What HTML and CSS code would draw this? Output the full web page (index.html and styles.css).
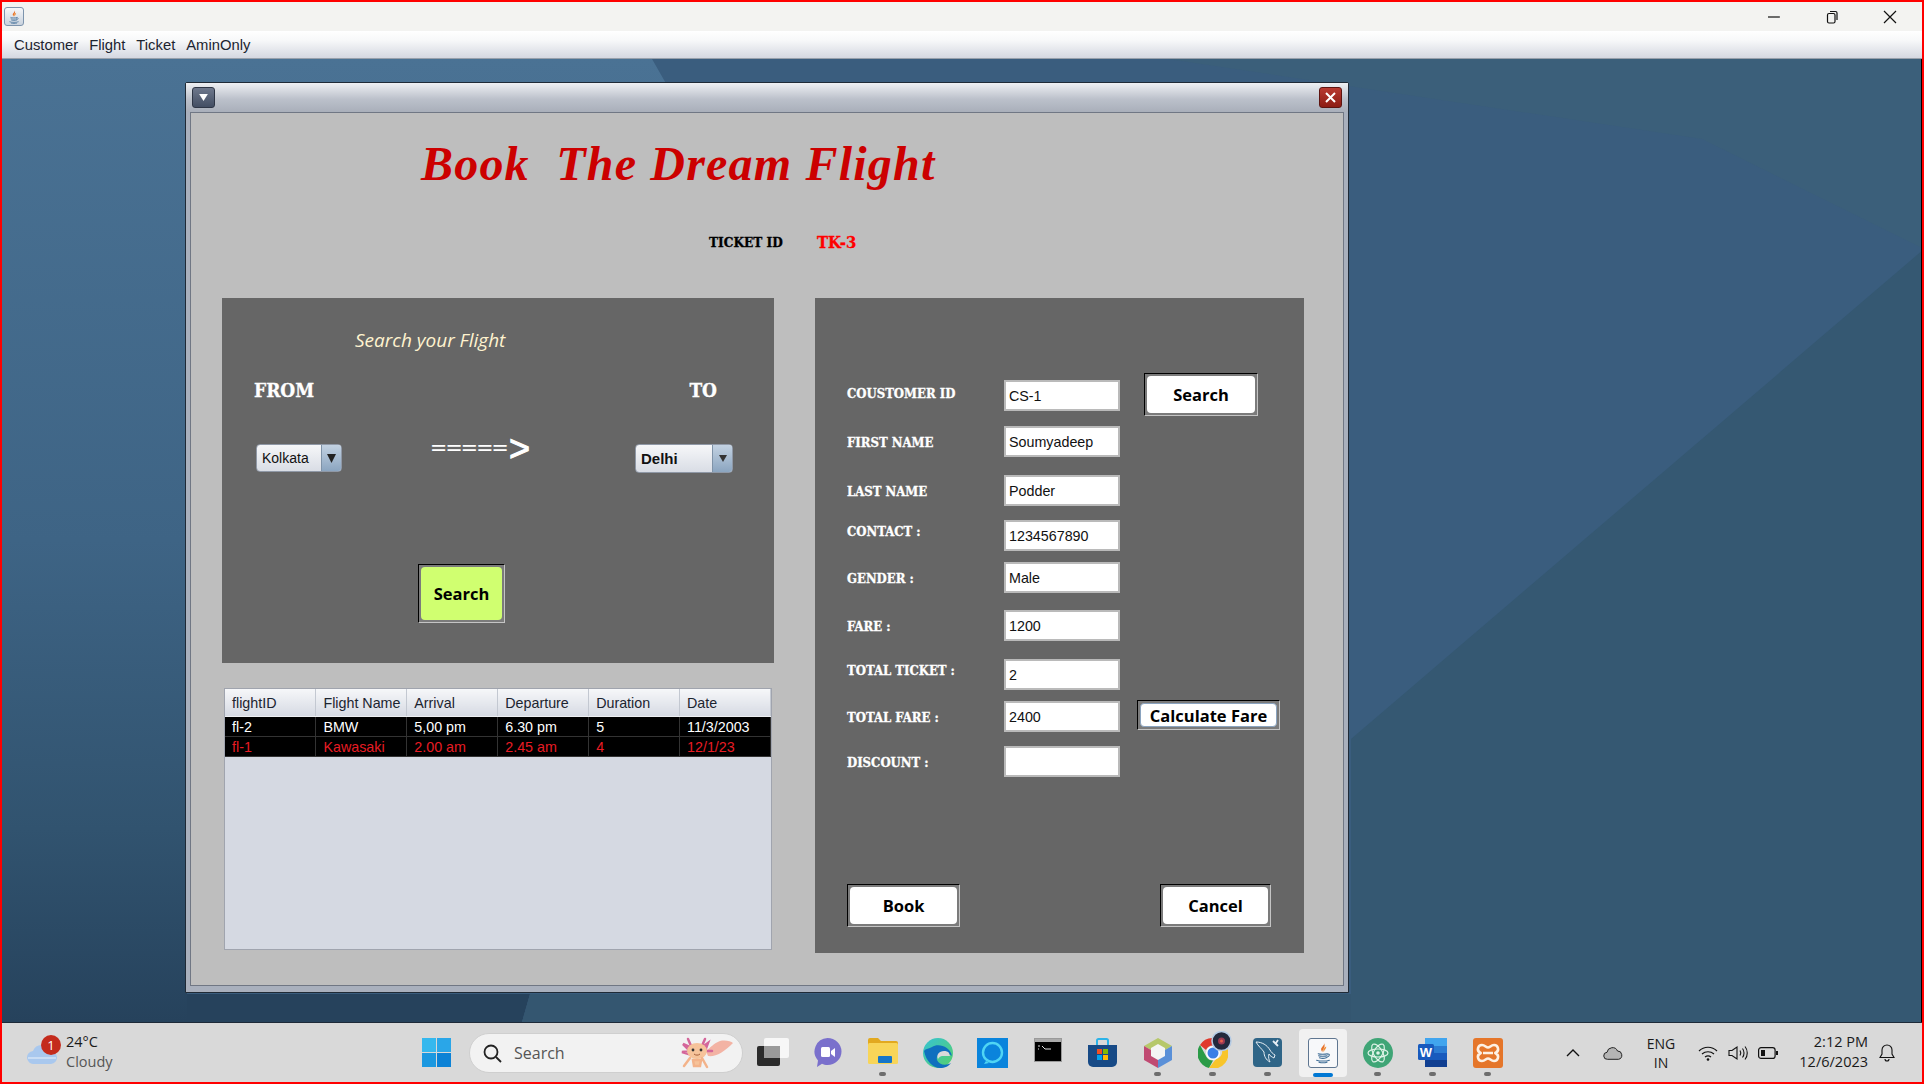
FILE: index.html
```html
<!DOCTYPE html>
<html>

<head>
    <title>Book The Dream Flight</title>
    <link rel="stylesheet" href="styles.css">
</head>

<body>
    <svg class="icon-defs" width="0" height="0">
        <symbol id="java-cup" viewBox="0 0 30 30">
            <path d="M16 2c2 4-5 6-3 10 .6 1.300 1.500 2 1.500 2-1.500-3 5-5 1.500-12z" fill="#e8722a"/>
            <path d="M19 7c-3 2-4.500 3-3.500 5.500.4 1 .8 1.500.8 1.500-.5-2 3-3.500 2.700-7z" fill="#f0923c"/>
            <path d="M9 16c2 .8 9 .8 11.500 0M9.500 18.500c2 .8 8.500.8 10.500 0M10.500 21c2 .7 6.500.7 8.500 0M20.500 16.500c3-.8 4 2.500-1 4M7 24c4 1.500 12 1.500 16 0M10 26.500c3 .8 7 .8 10 0" fill="none" stroke="#3f6d96" stroke-width="1.300" stroke-linecap="round"/>
        </symbol>
    </svg>

    <div class="screen">
        <div class="titlebar">
            <span class="app-icon"><svg width="16" height="16"><use href="#java-cup"/></svg></span>
            <div class="window-controls">
                <span class="window-btn"><svg width="14" height="14" viewBox="0 0 14 14"><path d="M1 7h12" stroke="#111" stroke-width="1.200"/></svg></span>
                <span class="window-btn"><svg width="14" height="14" viewBox="0 0 14 14"><rect x="2.500" y="3.500" width="7.500" height="9.500" rx="1.500" fill="none" stroke="#111" stroke-width="1.200"/><path d="M5 1.500h5.500a1.500 1.500 0 0 1 1.500 1.500v7" fill="none" stroke="#111" stroke-width="1.200"/></svg></span>
                <span class="window-btn"><svg width="14" height="14" viewBox="0 0 14 14"><path d="M1 1l12 12M13 1L1 13" stroke="#111" stroke-width="1.200"/></svg></span>
            </div>
        </div>

        <div class="menubar">
            <span class="menu-item">Customer</span>
            <span class="menu-item">Flight</span>
            <span class="menu-item">Ticket</span>
            <span class="menu-item">AminOnly</span>
        </div>

        <div class="desktop">
            <svg class="wallpaper" width="1922" height="963" viewBox="0 0 1922 963">
                <defs>
                    <linearGradient id="wall-left" x1="0" y1="0" x2="0" y2="1">
                        <stop offset="0" stop-color="#4a7294"/>
                        <stop offset="0.5" stop-color="#3e6485"/>
                        <stop offset="0.8" stop-color="#31536f"/>
                        <stop offset="1" stop-color="#26425c"/>
                    </linearGradient>
                </defs>
                <rect width="1922" height="963" fill="#3a5d7e"/>
                <polygon points="0,0 650,0 690,70 185,520 185,963 0,963" fill="url(#wall-left)"/>
                <polygon points="1166,0 1922,0 1922,190 1700,80" fill="#3b5f7a"/>
                <polygon points="1922,190 1349,680 1349,963 1922,963" fill="#355872"/>
                <polygon points="185,935 528,935 520,963 185,963" fill="#26425c"/>
                <polygon points="528,935 1349,935 1349,963 520,963" fill="#345670"/>
            </svg>

            <div class="internal-frame">
                <div class="frame-title">
                    <span class="frame-btn frame-menu"><svg width="9" height="7" viewBox="0 0 10 8"><path d="M0 0h10L5 8z" fill="#fff"/></svg></span>
                    <span class="frame-btn frame-close"><svg width="13" height="13" viewBox="0 0 13 13"><path d="M2 2l9 9M11 2l-9 9" stroke="#fff" stroke-width="2"/></svg></span>
                </div>

                <div class="frame-body">
                    <h1 class="book-title">Book  The Dream Flight</h1>
                    <div class="ticket-row">
                        <span class="ticket-label">TICKET ID</span>
                        <span class="ticket-value">TK-3</span>
                    </div>

                    <div class="panels">
                        <div class="left-column">
                            <div class="search-panel">
                                <div class="search-heading">Search your Flight</div>
                                <div class="route-row">
                                    <span class="route-label">FROM</span>
                                    <span class="route-label">TO</span>
                                </div>
                                <div class="combo-row">
                                    <div class="combo combo-from">
                                        <span class="combo-value">Kolkata</span>
                                        <span class="combo-arrow"><svg width="9" height="9" viewBox="0 0 9 9"><path d="M0 0h9L4.500 9z" fill="#222"/></svg></span>
                                    </div>
                                    <div class="route-arrow"><span class="arrow-bars">=====</span><span class="arrow-head">&gt;</span></div>
                                    <div class="combo combo-to">
                                        <span class="combo-value">Delhi</span>
                                        <span class="combo-arrow"><svg width="8" height="7" viewBox="0 0 8 7"><path d="M0 0h8L4 7z" fill="#333"/></svg></span>
                                    </div>
                                </div>
                                <div class="btn btn-find"><span class="btn-face">Search</span></div>
                            </div>

                            <div class="table-pane">
                                <table class="flight-table">
                                    <thead>
                                        <tr>
                                            <th>flightID</th>
                                            <th>Flight Name</th>
                                            <th>Arrival</th>
                                            <th>Departure</th>
                                            <th>Duration</th>
                                            <th>Date</th>
                                        </tr>
                                    </thead>
                                    <tbody>
                                        <tr>
                                            <td>fl-2</td>
                                            <td>BMW</td>
                                            <td>5,00 pm</td>
                                            <td>6.30 pm</td>
                                            <td>5</td>
                                            <td>11/3/2003</td>
                                        </tr>
                                        <tr class="row-alert">
                                            <td>fl-1</td>
                                            <td>Kawasaki</td>
                                            <td>2.00 am</td>
                                            <td>2.45 am</td>
                                            <td>4</td>
                                            <td>12/1/23</td>
                                        </tr>
                                    </tbody>
                                </table>
                            </div>
                        </div>

                        <div class="booking-panel">
                            <div class="booking-form">
                                <span class="form-label label-mid">COUSTOMER ID</span>
                                <div class="field">CS-1</div>
                                <div class="btn btn-customer"><span class="btn-face">Search</span></div>

                                <span class="form-label">FIRST NAME</span>
                                <div class="field">Soumyadeep</div>
                                <span></span>

                                <span class="form-label">LAST NAME</span>
                                <div class="field">Podder</div>
                                <span></span>

                                <span class="form-label label-high">CONTACT :</span>
                                <div class="field">1234567890</div>
                                <span></span>

                                <span class="form-label">GENDER :</span>
                                <div class="field">Male</div>
                                <span></span>

                                <span class="form-label">FARE :</span>
                                <div class="field">1200</div>
                                <span></span>

                                <span class="form-label label-high">TOTAL TICKET :</span>
                                <div class="field">2</div>
                                <span></span>

                                <span class="form-label">TOTAL FARE :</span>
                                <div class="field">2400</div>
                                <div class="btn btn-calc"><span class="btn-face">Calculate Fare</span></div>

                                <span class="form-label">DISCOUNT :</span>
                                <div class="field"></div>
                                <span></span>
                            </div>

                            <div class="booking-actions">
                                <div class="btn btn-book"><span class="btn-face">Book</span></div>
                                <div class="btn btn-cancel"><span class="btn-face">Cancel</span></div>
                            </div>
                        </div>
                    </div>
                </div>
            </div>
        </div>

        <div class="taskbar">
            <div class="weather">
                <span class="weather-icon">
                    <svg width="30" height="21" viewBox="0 0 30 21"><path d="M7 21a6.500 6.500 0 0 1-1-13A9 9 0 0 1 23 8a6.500 6.500 0 0 1 1 13z" fill="#a9c8ee"/><path d="M1 15h28" stroke="#d6e4f6" stroke-width="1.500"/></svg>
                    <span class="weather-badge">1</span>
                </span>
                <div class="weather-text">
                    <span>24°C</span>
                    <span class="weather-sub">Cloudy</span>
                </div>
            </div>

            <span class="start-btn">
                <svg width="29" height="29" viewBox="0 0 29 29"><rect width="14" height="14" fill="#35b8ee"/><rect x="15" width="14" height="14" fill="#2aa6e8"/><rect y="15" width="14" height="14" fill="#1b98e0"/><rect x="15" y="15" width="14" height="14" fill="#0c82d6"/></svg>
            </span>

            <div class="task-search">
                <svg width="20" height="20" viewBox="0 0 20 20"><circle cx="9" cy="9" r="6.500" fill="none" stroke="#222" stroke-width="1.800"/><path d="M14 14l5 5" stroke="#222" stroke-width="1.800"/></svg>
                <span class="task-search-text">Search</span>
                <svg class="axolotl" width="56" height="34" viewBox="0 0 56 34">
                    <path d="M30 20c8 1 16-4 25-13-2-2-8-3-13-2-6 2-10 7-14 10z" fill="#f3b3a4"/>
                    <path d="M10 3l4 9-9-4 7 7-8 1 10 3M27 3l-4 9 7-5-3 8 7 0" fill="none" stroke="#d4669a" stroke-width="2.500" stroke-linecap="round"/>
                    <ellipse cx="19" cy="15" rx="10" ry="8" fill="#f6c39a"/>
                    <path d="M12 22l-6 8M24 22l5 9M15 24h8l-1 6h-6z" fill="#f6c39a" stroke="#f3b38a" stroke-width="2.500" stroke-linecap="round"/>
                    <circle cx="15" cy="14" r="1.400" fill="#333"/><circle cx="23" cy="14" r="1.400" fill="#333"/>
                    <path d="M16 18c1.500 1.500 4.500 1.500 6 0" fill="none" stroke="#a5603c"/>
                </svg>
            </div>

            <div class="task-icons">
                <div class="task-slot">
                    <svg width="32" height="28" viewBox="0 0 32 28"><rect y="8" width="23" height="20" rx="2" fill="#2b2b2b"/><rect x="7" width="25" height="20" rx="2" fill="#f7f7f7"/><rect x="7" y="8" width="16" height="12" fill="#9a9a9a"/></svg>
                </div>
                <div class="task-slot">
                    <svg width="29" height="29" viewBox="0 0 29 29"><path d="M14.500 0a14 13.500 0 0 1 0 27c-2 0-4-.4-5.500-1.200L4 29l1-6.500A13.500 13.500 0 0 1 14.500 0z" fill="#7a70cc"/><rect x="8" y="9" width="9" height="10" rx="1.500" fill="#fff"/><path d="M18 13l4-3v9l-4-3z" fill="#fff"/></svg>
                </div>
                <div class="task-slot has-dot">
                    <svg width="30" height="26" viewBox="0 0 30 26"><path d="M0 2a2 2 0 0 1 2-2h8l3 3h15a2 2 0 0 1 2 2v4H0z" fill="#e2a91f"/><rect y="5" width="30" height="21" rx="1.500" fill="#f8d558"/><rect x="10" y="18" width="14" height="7" rx="1" fill="#1676c9"/></svg>
                </div>
                <div class="task-slot">
                    <svg width="30" height="30" viewBox="0 0 30 30"><defs><linearGradient id="edge-a" x1="0" y1="0" x2="1" y2="1"><stop offset="0" stop-color="#36c2d4"/><stop offset="1" stop-color="#56d06a"/></linearGradient></defs><circle cx="15" cy="15" r="15" fill="url(#edge-a)"/><path d="M1 13C3 23 10 30 17 30c5 0 9-2 11-5-5 3-12 2-14-3-1-4 2-7 7-7 3 0 6 1 8 3C27 8 15 5 9 9 5 11 2 11 1 13z" fill="#0f6fbf"/><path d="M15 21c-2-4 1-8 6-8 2 0 4 .6 5 2l1 3H19c-1 0-3 1-4 3z" fill="#d9d9d9"/></svg>
                </div>
                <div class="task-slot">
                    <svg width="31" height="30" viewBox="0 0 31 30"><rect width="31" height="30" fill="#0a84dc"/><circle cx="15.500" cy="14.500" r="9.500" fill="none" stroke="#4fd5f4" stroke-width="2.400"/><path d="M9 23l-2 3 5-1z" fill="#4fd5f4"/></svg>
                </div>
                <div class="task-slot">
                    <svg width="28" height="24" viewBox="0 0 28 24"><rect x=".5" y=".5" width="27" height="23" fill="#000" stroke="#9a9a9a"/><rect x="1" y="1" width="26" height="3" fill="#aaa"/><path d="M4 8h2M4 11h1M8 8l3 3h6" stroke="#ddd" stroke-width="1" fill="none"/></svg>
                </div>
                <div class="task-slot">
                    <svg width="29" height="29" viewBox="0 0 29 29"><path d="M9 7V2.500A1.500 1.500 0 0 1 10.500 1h8A1.500 1.500 0 0 1 20 2.500V7" fill="none" stroke="#2db3e8" stroke-width="2"/><path d="M0 7h29v17a5 5 0 0 1-5 5H5a5 5 0 0 1-5-5z" fill="#174a86"/><rect x="9" y="11" width="5" height="5" fill="#f25022"/><rect x="15" y="11" width="5" height="5" fill="#7fba00"/><rect x="9" y="17" width="5" height="5" fill="#00a4ef"/><rect x="15" y="17" width="5" height="5" fill="#ffb900"/></svg>
                </div>
                <div class="task-slot has-dot">
                    <svg width="28" height="30" viewBox="0 0 28 30"><path d="M14 0l14 8-14 8L0 8z" fill="#b6c86a"/><path d="M0 8l14 8v14L0 22z" fill="#c04a72"/><path d="M28 8l-14 8v14l14-8z" fill="#5a90d8"/><path d="M14 6l7 4v8l-7 4-7-4v-8z" fill="#f4f4f4"/></svg>
                </div>
                <div class="task-slot has-dot">
                    <svg class="chrome-icon" width="30" height="30" viewBox="0 0 30 30"><path d="M15 0a15 15 0 0 1 13 7.500H15a7.500 7.500 0 0 0-7 4.500L2 7A15 15 0 0 1 15 0z" fill="#e0392c"/><path d="M2 7l6.500 12a7.500 7.500 0 0 0 6.500 3.500L11 30A15 15 0 0 1 2 7z" fill="#2b9b47"/><path d="M28 7.500A15 15 0 0 1 11 30l7-9a7.500 7.500 0 0 0 3-13.500z" fill="#f8c52b"/><circle cx="15" cy="15" r="7" fill="#fff"/><circle cx="15" cy="15" r="5.500" fill="#3c7fe6"/></svg>
                    <span class="camera-badge"><svg width="21" height="20" viewBox="0 0 21 20"><circle cx="10.500" cy="10" r="9.500" fill="#23293c" stroke="#b5cbe4" stroke-width="1.600"/><circle cx="10.500" cy="10" r="3.500" fill="#9a3a52"/><circle cx="10.500" cy="10" r="1.500" fill="#e8604c"/></svg></span>
                </div>
                <div class="task-slot has-dot">
                    <svg width="29" height="29" viewBox="0 0 29 29"><rect width="29" height="29" rx="4" fill="#2f6587"/><path d="M3 4c6 0 11 3 14 8 1 2 3 4 5 5l-1 3c-2-1-4-2-5-4-1 3 0 6 1 8-4-2-6-6-6-10C9 11 5 8 3 4z" fill="none" stroke="#e6eef4" stroke-width="1"/><path d="M20 3l5 5M25 2l-2 3" stroke="#e6eef4" stroke-width="1.800"/></svg>
                </div>
                <div class="task-slot task-active">
                    <svg width="30" height="30" viewBox="0 0 30 30" class="java-tile"><rect x=".5" y=".5" width="29" height="29" rx="2.500" fill="#f7f8fa" stroke="#5f7690"/><use href="#java-cup" x="3" y="2" width="24" height="26"/></svg>
                    <span class="active-bar"></span>
                </div>
                <div class="task-slot has-dot">
                    <svg width="30" height="30" viewBox="0 0 30 30"><circle cx="15" cy="15" r="15" fill="#3fa576"/><g fill="none" stroke="#dff3e8" stroke-width="1.200"><ellipse cx="15" cy="15" rx="10" ry="4.500" transform="rotate(60 15 15)"/><ellipse cx="15" cy="15" rx="10" ry="4.500" transform="rotate(-60 15 15)"/><ellipse cx="15" cy="15" rx="10" ry="4"/></g><circle cx="15" cy="15" r="1.800" fill="#dff3e8"/></svg>
                </div>
                <div class="task-slot has-dot">
                    <svg width="29" height="29" viewBox="0 0 29 29"><rect x="7" width="22" height="8" fill="#41a5ee"/><rect x="7" y="8" width="22" height="7" fill="#2b7cd3"/><rect x="7" y="15" width="22" height="7" fill="#185abd"/><rect x="7" y="22" width="22" height="7" fill="#103f91"/><rect y="6" width="16" height="16" rx="1.500" fill="#185abd"/><text x="8" y="19" class="word-letter" text-anchor="middle">W</text></svg>
                </div>
                <div class="task-slot has-dot">
                    <svg width="30" height="30" viewBox="0 0 30 30"><rect width="30" height="30" rx="3" fill="#e5762a"/><path d="M9 7C12 7 13 9.500 15 9.500S18 7 21 7A4 4 0 0 1 23 14.500C22 15 22 15 23 15.500A4 4 0 0 1 21 23C18 23 17 20.500 15 20.500S12 23 9 23A4 4 0 0 1 7 15.500C8 15 8 15 7 14.500A4 4 0 0 1 9 7ZM10 15h10" fill="none" stroke="#fdf1e4" stroke-width="2.600"/></svg>
                </div>
            </div>

            <div class="tray">
                <svg class="tray-chevron" width="14" height="8" viewBox="0 0 14 8"><path d="M1 7l6-6 6 6" fill="none" stroke="#111" stroke-width="1.400"/></svg>
                <svg class="tray-cloud" width="20" height="14" viewBox="0 0 20 14"><path d="M4.500 13.300a3.500 3.500 0 0 1-.5-7A5.500 5.500 0 0 1 14.500 5a4.200 4.200 0 0 1 1 8.300z" fill="#b5b5b5" stroke="#222"/></svg>
                <div class="tray-lang"><span>ENG</span><span>IN</span></div>
                <svg class="tray-wifi" width="20" height="16" viewBox="0 0 20 16"><path d="M1 6c5-5 13-5 18 0M4 9c3.500-3 8.500-3 12 0M7 12c2-1.500 4-1.500 6 0" fill="none" stroke="#111" stroke-width="1.200"/><circle cx="10" cy="14.500" r="1.300" fill="#111"/></svg>
                <svg class="tray-volume" width="20" height="16" viewBox="0 0 20 16"><path d="M1 5.500h3L9 2v12l-5-3.500H1z" fill="none" stroke="#111" stroke-width="1.100"/><path d="M12 5.500c1 1.500 1 3.500 0 5M14.500 3.500c2 2.500 2 6.500 0 9M17 1.500c3 3.500 3 9.500 0 13" fill="none" stroke="#111" stroke-width="1.100"/></svg>
                <svg class="tray-battery" width="20" height="12" viewBox="0 0 20 12"><rect x=".6" y=".6" width="16.500" height="10.800" rx="2.500" fill="none" stroke="#111" stroke-width="1.200"/><rect x="3" y="3" width="4" height="6" fill="#111"/><rect x="18" y="4" width="2" height="4" fill="#111"/></svg>
                <div class="tray-clock"><span>2:12 PM</span><span>12/6/2023</span></div>
                <svg class="tray-bell" width="16" height="18" viewBox="0 0 16 18"><path d="M8 1a5 5 0 0 0-5 5v4l-2 3.500h14L13 10V6a5 5 0 0 0-5-5zM6 15a2 2 0 0 0 4 0" fill="none" stroke="#111" stroke-width="1.100"/></svg>
            </div>
        </div>
    </div>
</body>

</html>
```

FILE: styles.css
```css
body {
    margin: 0;
    font-family: "Liberation Sans", Arial, sans-serif;
    overflow: hidden;
}

.icon-defs {
    position: absolute;
}

.screen {
    width: 1924px;
    height: 1084px;
    box-sizing: border-box;
    border: 2px solid #ff0000;
    display: flex;
    flex-direction: column;
}

/* window chrome */
.titlebar {
    height: 29px;
    background-color: #f3f3f1;
    display: flex;
    align-items: center;
}

.app-icon {
    width: 18px;
    height: 17px;
    margin-left: 2px;
    border: 1px solid #7d94ad;
    border-radius: 3px;
    background: linear-gradient(#f6f7f9, #c9d2dd);
    display: flex;
    align-items: center;
    justify-content: center;
}

.window-controls {
    margin-left: auto;
    padding-right: 3px;
    display: flex;
}

.window-btn {
    width: 58px;
    display: flex;
    justify-content: center;
}

.menubar {
    height: 27px;
    background: linear-gradient(#ffffff, #f7f8f9 35%, #d5d8e1);
    border-bottom: 1px solid #98a0ab;
    padding-left: 7px;
    display: flex;
    align-items: center;
    gap: 1px;
    font-size: 14.8px;
    color: #1c2430;
}

.menu-item {
    padding: 0 5px;
}

/* desktop */
.desktop {
    flex: 1;
    position: relative;
    overflow: hidden;
    border-right: 1px solid #000;
    background-color: #3a5d7e;
}

.wallpaper {
    position: absolute;
    left: 0;
    top: 0;
}

.internal-frame {
    position: absolute;
    left: 183px;
    top: 23px;
    width: 1164px;
    height: 911px;
    box-sizing: border-box;
    border: 1px solid #1f2a36;
    border-radius: 2px 2px 0 0;
    background: #a9b0bd;
}

.frame-title {
    height: 29px;
    padding: 4px 6px 0;
    box-sizing: border-box;
    background: linear-gradient(#eef0f3, #bcc1cb 55%, #a9afba);
    display: flex;
    justify-content: space-between;
}

.frame-btn {
    width: 23px;
    height: 21px;
    box-sizing: border-box;
    border-radius: 3px;
    display: flex;
    align-items: center;
    justify-content: center;
}

.frame-menu {
    background: linear-gradient(#6e788c, #434e63);
    border: 1px solid #2e3646;
}

.frame-close {
    background: linear-gradient(#b83a30, #8d1c14);
    border: 1px solid #5e1410;
}

.frame-body {
    margin: 0 4px;
    width: 1154px;
    height: 874px;
    box-sizing: border-box;
    border: 1px solid #707784;
    background-color: #bebebe;
    padding-left: 31px;
}

.book-title {
    margin: 0 0 0 199px;
    padding-top: 26px;
    height: 73px;
    font-family: "Liberation Serif", serif;
    font-size: 48px;
    letter-spacing: 1.2px;
    line-height: 50px;
    font-weight: bold;
    font-style: italic;
    white-space: pre;
    color: #cc0000;
}

.ticket-row {
    margin: 22px 0 0 487px;
    height: 16px;
    display: flex;
    align-items: center;
    font-family: "DejaVu Serif", serif;
    font-stretch: condensed;
    font-weight: bold;
    font-size: 13.5px;
}

.ticket-label {
    width: 108px;
    color: #000;
    -webkit-text-stroke: 0.3px #000;
}

.ticket-value {
    color: #ff0000;
    font-size: 16.5px;
    -webkit-text-stroke: 0.3px #ff0000;
}

.panels {
    margin-top: 48px;
    display: flex;
    gap: 41px;
}

.left-column {
    width: 552px;
}

/* search panel */
.search-panel {
    height: 365px;
    box-sizing: border-box;
    padding-top: 32px;
    background-color: #666666;
}

.search-heading {
    margin-left: 133px;
    height: 20px;
    line-height: 20px;
    font-family: "Open Sans", sans-serif;
    font-style: italic;
    font-size: 19px;
    color: #fff3cf;
}

.route-row {
    margin-top: 30px;
    padding: 0 57px 0 32px;
    height: 20px;
    display: flex;
    justify-content: space-between;
    align-items: center;
}

.route-label {
    font-family: "DejaVu Serif", serif;
    font-stretch: condensed;
    font-weight: bold;
    font-size: 19px;
    color: #ffffff;
    -webkit-text-stroke: 0.3px #ffffff;
}

.combo-row {
    margin-top: 44px;
    padding-left: 34px;
    display: flex;
    align-items: flex-start;
}

.combo {
    height: 28px;
    box-sizing: border-box;
    border: 1px solid #8f98a6;
    border-radius: 4px;
    background: linear-gradient(#f6f7f9, #d9dde5);
    display: flex;
    overflow: hidden;
    font-size: 14px;
    color: #111;
}

.combo-from {
    width: 86px;
}

.combo-to {
    width: 98px;
    height: 29px;
    margin-left: 105px;
    font-size: 15px;
    font-weight: bold;
}

.combo-value {
    flex: 1;
    padding-left: 5px;
    line-height: 27px;
}

.combo-arrow {
    width: 19px;
    background: linear-gradient(#c3d2e2, #8ba5c0);
    border-left: 1px solid #7f93a8;
    display: flex;
    align-items: center;
    justify-content: center;
}

.route-arrow {
    margin: -8px 0 0 89px;
    width: 99px;
    height: 26px;
    display: flex;
    align-items: center;
    color: #ffffff;
    font-weight: bold;
}

.arrow-bars {
    width: 78px;
    font-size: 26px;
    line-height: 26px;
    letter-spacing: 0.2px;
    transform: scaleY(0.6);
}

.arrow-head {
    font-size: 36px;
    font-weight: normal;
    line-height: 26px;
    -webkit-text-stroke: 1px #ffffff;
}

/* buttons */
.btn {
    box-sizing: border-box;
    border: 1px solid;
    border-color: #000000 #c4c4c4 #c4c4c4 #000000;
    padding: 2px;
    background-color: #7b7b7b;
    display: flex;
}

.btn-face {
    flex: 1;
    border-radius: 4px;
    background-color: #ffffff;
    display: flex;
    align-items: center;
    justify-content: center;
    font-family: "Open Sans", sans-serif;
    font-weight: bold;
    font-size: 16.5px;
    color: #000000;
}

.btn-find {
    margin: 91px 0 0 196px;
    width: 87px;
    height: 59px;
}

.btn-find .btn-face {
    background-color: #d0ff70;
}

/* flights table */
.table-pane {
    margin: 25px 0 0 2px;
    width: 548px;
    height: 262px;
    box-sizing: border-box;
    border: 1px solid #a0a4ae;
    background-color: #d5d9e2;
}

.flight-table {
    width: 546px;
    table-layout: fixed;
    border-collapse: collapse;
    font-size: 14.3px;
}

.flight-table th {
    height: 27px;
    padding: 0 0 0 7px;
    text-align: left;
    font-weight: normal;
    color: #1c2430;
    background: linear-gradient(#f6f7f9, #d6dae3);
    border-right: 1px solid #c3c8d1;
    border-bottom: 1px solid #eef0f3;
}

.flight-table td {
    height: 19px;
    padding: 0 0 0 7px;
    background-color: #000000;
    color: #ffffff;
    border-right: 1px solid #333333;
    border-bottom: 1px solid #333333;
}

.flight-table .row-alert td {
    color: #e81c24;
}

/* booking panel */
.booking-panel {
    width: 489px;
    height: 655px;
    box-sizing: border-box;
    padding: 82px 0 0 32px;
    background-color: #666666;
}

.booking-form {
    display: grid;
    grid-template-columns: 157px 116px 1fr;
    grid-template-rows: 46px 49px 45px 42px 48px 49px 42px 45px 31px;
    align-items: start;
}

.form-label {
    margin-top: 10px;
    font-family: "DejaVu Serif", serif;
    font-stretch: condensed;
    font-weight: bold;
    font-size: 13px;
    line-height: 14px;
    color: #ffffff;
    -webkit-text-stroke: 0.3px #ffffff;
}

.label-mid {
    margin-top: 7px;
}

.label-high {
    margin-top: 5px;
}

.field {
    height: 31px;
    box-sizing: border-box;
    border: 2px solid #bababa;
    background-color: #ffffff;
    padding: 2px 0 0 3px;
    font-size: 14.3px;
    line-height: 25px;
    color: #111111;
}

.btn-customer {
    margin: -7px 0 0 24px;
    width: 114px;
    height: 43px;
}

.btn-calc {
    margin: -1px 0 0 17px;
    width: 143px;
    height: 30px;
}

.btn-calc .btn-face {
    border: 1px solid #8aa3bf;
}

.booking-actions {
    margin-top: 107px;
    display: flex;
}

.btn-book {
    width: 113px;
    height: 43px;
}

.btn-cancel {
    margin-left: 200px;
    width: 111px;
    height: 43px;
}

/* taskbar */
.taskbar {
    height: 60px;
    box-sizing: border-box;
    border-top: 1px solid #1d2a38;
    background-color: #d9d9d9;
    display: flex;
    align-items: center;
    font-family: "Open Sans", sans-serif;
    font-size: 14.5px;
    color: #1a1a1a;
}

.weather {
    width: 404px;
    padding-left: 25px;
    box-sizing: border-box;
    display: flex;
    gap: 9px;
}

.weather-icon {
    position: relative;
    width: 30px;
    margin-top: 9px;
}

.weather-badge {
    position: absolute;
    left: 14px;
    top: -8px;
    width: 20px;
    height: 20px;
    border-radius: 50%;
    background-color: #c42b1c;
    color: #ffffff;
    font-size: 13px;
    line-height: 20px;
    text-align: center;
}

.weather-text {
    display: flex;
    flex-direction: column;
    line-height: 20px;
    margin-top: -2px;
}

.weather-sub {
    color: #555555;
}

.start-btn {
    margin-left: 16px;
    display: flex;
}

.task-search {
    margin-left: 18px;
    width: 274px;
    height: 40px;
    box-sizing: border-box;
    border: 1px solid #cfcfcf;
    border-radius: 20px;
    background-color: #f2f2f2;
    padding: 0 8px 0 12px;
    display: flex;
    align-items: center;
}

.task-search-text {
    margin-left: 12px;
    font-size: 16px;
    color: #555555;
    flex: 1;
}

.task-icons {
    margin-left: 2px;
    display: flex;
}

.task-slot {
    position: relative;
    width: 55px;
    height: 48px;
    box-sizing: border-box;
    padding-top: 9px;
    display: flex;
    justify-content: center;
}

.has-dot::after {
    content: "";
    position: absolute;
    left: 24px;
    bottom: 1px;
    width: 7px;
    height: 4px;
    border-radius: 2px;
    background-color: #6d6d6d;
}

.camera-badge {
    position: absolute;
    left: 26px;
    top: 2px;
    display: flex;
}

.task-active::before {
    content: "";
    position: absolute;
    left: 4px;
    top: 0;
    width: 48px;
    height: 48px;
    border-radius: 4px;
    background-color: #f1f1f1;
}

.java-tile {
    position: relative;
}

.active-bar {
    position: absolute;
    left: 18px;
    bottom: 0;
    width: 20px;
    height: 4px;
    border-radius: 2px;
    background-color: #0078d4;
}

.word-letter {
    font-family: "Liberation Sans", sans-serif;
    font-size: 13px;
    font-weight: bold;
    fill: #ffffff;
}

.tray {
    margin-left: 51px;
    display: flex;
    align-items: center;
}

.tray-cloud {
    margin-left: 23px;
}

.tray-lang {
    margin-left: 24px;
    width: 28px;
    display: flex;
    flex-direction: column;
    align-items: center;
    line-height: 19px;
    font-size: 14px;
}

.tray-wifi {
    margin-left: 23px;
}

.tray-volume {
    margin-left: 10px;
}

.tray-battery {
    margin-left: 10px;
}

.tray-clock {
    margin-left: 15px;
    width: 75px;
    margin-top: -2px;
    display: flex;
    flex-direction: column;
    align-items: flex-end;
    line-height: 20px;
}

.tray-bell {
    margin-left: 11px;
}
```
